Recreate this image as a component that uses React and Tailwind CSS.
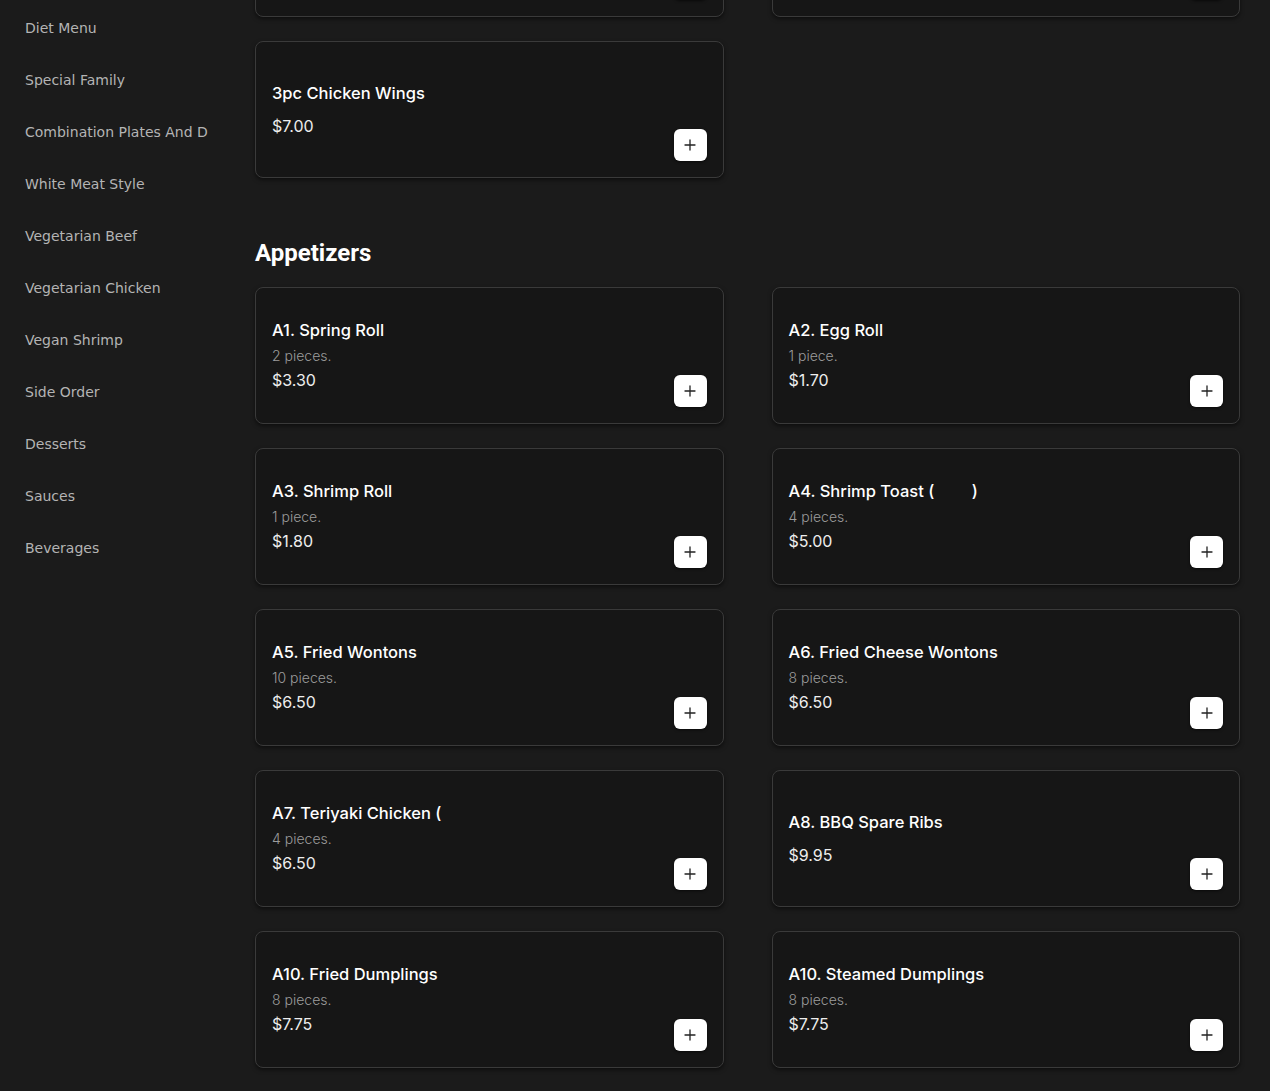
import React from 'react';

const categories = [
  'Diet Menu',
  'Special Family',
  'Combination Plates And D',
  'White Meat Style',
  'Vegetarian Beef',
  'Vegetarian Chicken',
  'Vegan Shrimp',
  'Side Order',
  'Desserts',
  'Sauces',
  'Beverages',
];

// last row of the section above, mostly scrolled out of view
const previous = [
  { name: 'Chicken Fried Rice', price: '$6.50' },
  { name: 'Egg Foo Young', price: '$8.50' },
  { name: '3pc Chicken Wings', price: '$7.00' },
];

const appetizers = [
  { name: 'A1. Spring Roll', desc: '2 pieces.', price: '$3.30' },
  { name: 'A2. Egg Roll', desc: '1 piece.', price: '$1.70' },
  { name: 'A3. Shrimp Roll', desc: '1 piece.', price: '$1.80' },
  { name: 'A4. Shrimp Toast (\u2003\u2003 )', desc: '4 pieces.', price: '$5.00' },
  { name: 'A5. Fried Wontons', desc: '10 pieces.', price: '$6.50' },
  { name: 'A6. Fried Cheese Wontons', desc: '8 pieces.', price: '$6.50' },
  { name: 'A7. Teriyaki Chicken (', desc: '4 pieces.', price: '$6.50' },
  { name: 'A8. BBQ Spare Ribs', price: '$9.95' },
  { name: 'A10. Fried Dumplings', desc: '8 pieces.', price: '$7.75' },
  { name: 'A10. Steamed Dumplings', desc: '8 pieces.', price: '$7.75' },
];

function PlusIcon() {
  return (
    <svg width="12" height="12" viewBox="0 0 12 12" fill="none">
      <path d="M6 1v10M1 6h10" stroke="#222" strokeWidth="1.3" strokeLinecap="round" />
    </svg>
  );
}

function ItemCard({ item }) {
  return (
    <div className="h-[137px] flex rounded-lg border border-[#3a3a3a] bg-[#161616] shadow-[0_2px_4px_rgba(0,0,0,0.5)] p-4">
      <div className="flex-1 flex flex-col justify-center">
        <p className="text-[16.5px] leading-[25px] font-medium text-white">{item.name}</p>
        {item.desc && (
          <p className="text-[14px] leading-[25px] font-light text-[#9c9c9c]">{item.desc}</p>
        )}
        <p className={`text-[16px] leading-[25px] text-[#ededed] ${item.desc ? '' : 'mt-2'}`}>
          {item.price}
        </p>
      </div>
      <button className="self-end w-[33px] h-[32px] rounded-md bg-white flex items-center justify-center shadow-[0_1px_3px_rgba(0,0,0,0.6)]">
        <PlusIcon />
      </button>
    </div>
  );
}

export default function App() {
  return (
    <div className="h-[1091px] overflow-hidden bg-[#1b1b1b] flex font-['Inter',sans-serif]">
      {/* Sidebar */}
      <aside className="w-[255px] shrink-0 pl-[25px] pt-[2px] font-['DejaVu_Sans',sans-serif]">
        <ul>
          {categories.map((c) => (
            <li key={c} className="py-4 text-[14px] leading-5 text-[#b4b4b4] whitespace-nowrap">
              {c}
            </li>
          ))}
        </ul>
      </aside>

      {/* Menu */}
      <main className="flex-1 pr-[30px]">
        <div className="-mt-[120px] grid grid-cols-2 gap-x-12 gap-y-6">
          {previous.map((item, i) => (
            <ItemCard key={i} item={item} />
          ))}
        </div>

        <h2 className="mt-[59px] mb-[18px] text-[24px] leading-8 font-bold text-white font-['Roboto',sans-serif]">
          Appetizers
        </h2>
        <div className="grid grid-cols-2 gap-x-12 gap-y-6">
          {appetizers.map((item, i) => (
            <ItemCard key={i} item={item} />
          ))}
        </div>
      </main>
    </div>
  );
}
